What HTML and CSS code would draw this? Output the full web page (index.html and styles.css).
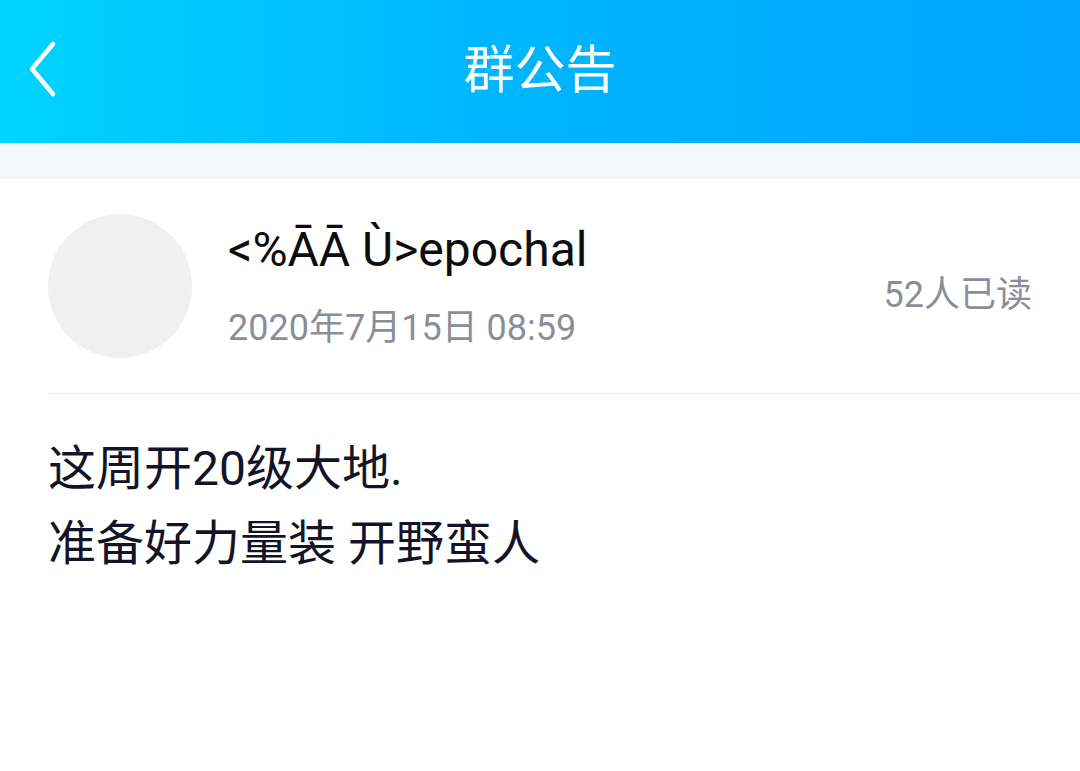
FILE: index.html
```html
<!DOCTYPE html>
<html lang="zh">
<head>
<meta charset="utf-8">
<link rel="stylesheet" href="styles.css">
</head>
<body>
<header class="bar">
  <div class="back">
    <svg width="40" height="60" viewBox="0 0 40 60"><path d="M27 6 L6 31 L27 56" fill="none" stroke="#fff" stroke-width="4.5" stroke-linecap="round" stroke-linejoin="round"/></svg>
  </div>
  <div class="title">群公告</div>
</header>
<div class="gap"></div>
<main class="card">
  <div class="head">
    <div class="avatar"></div>
    <div class="meta">
      <div class="name">&lt;%ĀĀ Ù&gt;epochal</div>
      <div class="date">2020年7月15日 08:59</div>
    </div>
    <div class="read">52人已读</div>
  </div>
  <div class="divider"></div>
  <div class="content">
    <p>这周开20级大地.</p>
    <p>准备好力量装 开野蛮人</p>
  </div>
</main>
</body>
</html>
```
FILE: styles.css
```css
* { box-sizing: border-box; }
html, body { margin: 0; padding: 0; background: #fff; }
body {
  width: 1080px;
  height: 771px;
  overflow: hidden;
  font-family: Roboto, "Noto Sans CJK SC", sans-serif;
}
.bar {
  height: 143px;
  background: linear-gradient(90deg, #00d4ff 0%, #00b6fe 45%, #00a5ff 100%);
  position: relative;
  display: flex;
  align-items: center;
  justify-content: center;
}
.back {
  position: absolute;
  left: 26px;
  top: 38px;
  width: 40px;
  height: 60px;
}
.back svg { display: block; }
.title {
  color: #fff;
  font-size: 51px;
  font-family: "Noto Sans CJK SC", sans-serif;
  line-height: 1;
  margin-top: -10px;
}
.gap { height: 36px; background: #f4f6f9; }
.card { padding: 0 0 0 48px; }
.head {
  display: flex;
  align-items: center;
  height: 214px;
  padding-right: 48px;
}
.avatar {
  width: 144px;
  height: 144px;
  border-radius: 50%;
  background: #f0f0f0;
  flex: none;
}
.meta {
  margin-left: 36px;
  flex: 1;
  display: flex;
  flex-direction: column;
}
.name {
  font-size: 48px;
  color: #0d0d0d;
  line-height: 1;
}
.date {
  font-size: 36px;
  color: #8b8e99;
  line-height: 1;
  margin-top: 36px;
}
.read {
  font-size: 36px;
  color: #8b8e99;
  line-height: 1;
  margin-top: 18px;
}
.divider { height: 1px; background: #ebebee; }
.content {
  padding-top: 37px;
  color: #141428;
  font-size: 48px;
}
.content p {
  margin: 0;
  line-height: 75px;
}
```
